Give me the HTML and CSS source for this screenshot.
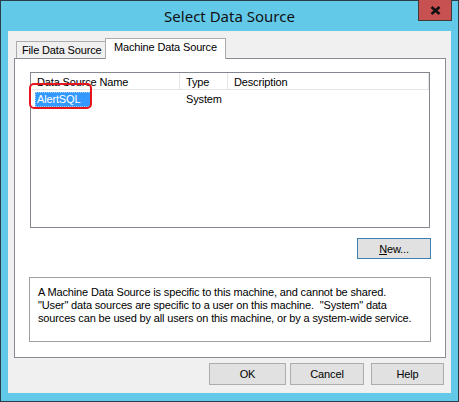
FILE: index.html
```html
<!DOCTYPE html>
<html lang="en">
<head>
    <meta charset="UTF-8">
    <title>Select Data Source</title>
    <link rel="stylesheet" href="styles.css">
</head>
<body>

    <div class="window">
        <!-- Barre de titre -->
        <div class="titlebar">
            <span class="title">Select Data Source</span>
            <div class="close">
                <svg width="11" height="9" viewBox="0 0 11 9">
                    <path d="M1.5 1 L9.5 8 M9.5 1 L1.5 8" stroke="#111" stroke-width="2.6" fill="none"/>
                </svg>
            </div>
        </div>

        <div class="client">
            <!-- Onglets -->
            <div class="tabs">
                <div class="tab">File Data Source</div>
                <div class="tab active">Machine Data Source</div>
            </div>

            <div class="panel">
                <div class="listview">
                    <div class="lv-head">
                        <div class="col col-name">Data Source Name</div>
                        <div class="col col-type">Type</div>
                        <div class="col col-desc">Description</div>
                    </div>
                    <div class="lv-row">
                        <div class="col col-name"><span class="selected">AlertSQL</span></div>
                        <div class="col col-type">System</div>
                        <div class="col col-desc"></div>
                    </div>
                    <span class="callout"></span>
                </div>

                <div class="new-row">
                    <button class="btn btn-default"><u>N</u>ew...</button>
                </div>

                <div class="desc">
                    A Machine Data Source is specific to this machine, and cannot be shared.<br>
                    "User" data sources are specific to a user on this machine.&nbsp; "System" data<br>
                    sources can be used by all users on this machine, or by a system-wide service.
                </div>
            </div>

            <!-- Boutons du bas -->
            <div class="buttons">
                <button class="btn btn-ok">OK</button>
                <button class="btn btn-cancel">Cancel</button>
                <button class="btn btn-help">Help</button>
            </div>
        </div>
    </div>

</body>
</html>
```

FILE: styles.css
```css
/* Style général */
body {
    margin: 0;
    font-family: 'Liberation Sans', Arial, sans-serif;
    font-size: 11px;
    letter-spacing: -0.15px;
    color: #000;
}

/* Fenêtre */
.window {
    width: 459px;
    height: 402px;
    box-sizing: border-box;
    border: 1px solid #2b3d48;
    background: #63c9e9;
    padding: 0 7px 8px 7px;
    display: flex;
    flex-direction: column;
}

.titlebar {
    height: 30px;
    position: relative;
    display: flex;
    align-items: center;
    justify-content: center;
}
.title {
    font-family: 'Noto Sans', sans-serif;
    font-size: 15px;
    letter-spacing: 0;
    color: #111;
    margin-top: -1px;
}
.close {
    position: absolute;
    top: -1px;
    right: -1px;
    width: 32px;
    height: 20px;
    background: #c75050;
    border: 1px solid #3c3c3c;
    border-top: none;
    display: flex;
    align-items: center;
    justify-content: center;
}

/* Zone client */
.client {
    flex: 1;
    background: #f0f0f0;
    display: flex;
    flex-direction: column;
}

/* Onglets */
.tabs {
    display: flex;
    align-items: flex-end;
    margin-top: 7px;
    padding-left: 8px;
    height: 20px;
    position: relative;
    z-index: 1;
}
.tab {
    box-sizing: border-box;
    height: 17px;
    width: 90px;
    border: 1px solid #acacac;
    border-bottom: none;
    background: #f0f0f0;
    padding: 2px 0 0 5px;
    white-space: nowrap;
    overflow: hidden;
}
.tab.active {
    width: 121px;
    height: 21px;
    margin-left: -1px;
    margin-bottom: -1px;
    background: #fff;
    padding: 2px 0 0 8px;
}

.panel {
    box-sizing: border-box;
    margin-left: 6px;
    width: 432px;
    height: 300px;
    background: #fff;
    border: 1px solid #898c95;
    padding: 13px 15px 0 15px;
}

/* Liste */
.listview {
    position: relative;
    box-sizing: border-box;
    height: 156px;
    border: 1px solid #828790;
}
.lv-head {
    display: flex;
    height: 16px;
    border-bottom: 1px solid #e5e5e5;
}
.lv-head .col {
    border-right: 1px solid #e5e5e5;
    padding: 3px 0 0 6px;
}
.col {
    box-sizing: border-box;
    white-space: nowrap;
}
.col-name { width: 149px; }
.col-type { width: 48px; }
.col-desc { flex: 1; }

.lv-row {
    display: flex;
    margin-top: 2px;
    height: 15px;
    line-height: 15px;
}
.lv-row .col-name { padding-left: 4px; }
.lv-row .col-type { padding-left: 6px; }
.selected {
    display: inline-block;
    background: #3399ff;
    color: #fff;
    padding: 0 11px 0 2px;
    outline: 1px dotted #9fd0ff;
    outline-offset: -1px;
}

/* Cadre rouge */
.callout {
    position: absolute;
    left: -2px;
    top: 10px;
    width: 59px;
    height: 22px;
    border: 2px solid #e8141b;
    border-radius: 5px;
}

.new-row {
    display: flex;
    justify-content: flex-end;
    margin: 10px -1px 0 0;
}

/* Boutons */
.btn {
    box-sizing: border-box;
    height: 22px;
    background: #e1e1e1;
    border: 1px solid #adadad;
    font-family: 'Liberation Sans', Arial, sans-serif;
    font-size: 11px;
    letter-spacing: -0.15px;
    color: #000;
    padding: 0;
}
.btn-default {
    width: 74px;
    height: 21px;
    border-color: #3c7fb1;
}

.desc {
    box-sizing: border-box;
    margin: 18px -1px 0 -1px;
    height: 65px;
    border: 1px solid #a0a0a0;
    padding: 8px 8px;
    line-height: 13px;
    white-space: nowrap;
}

.buttons {
    display: flex;
    margin-top: 5px;
    padding-left: 201px;
}
.btn-ok { width: 77px; }
.btn-cancel { width: 74px; margin-left: 4px; }
.btn-help { width: 73px; margin-left: 7px; }
```
